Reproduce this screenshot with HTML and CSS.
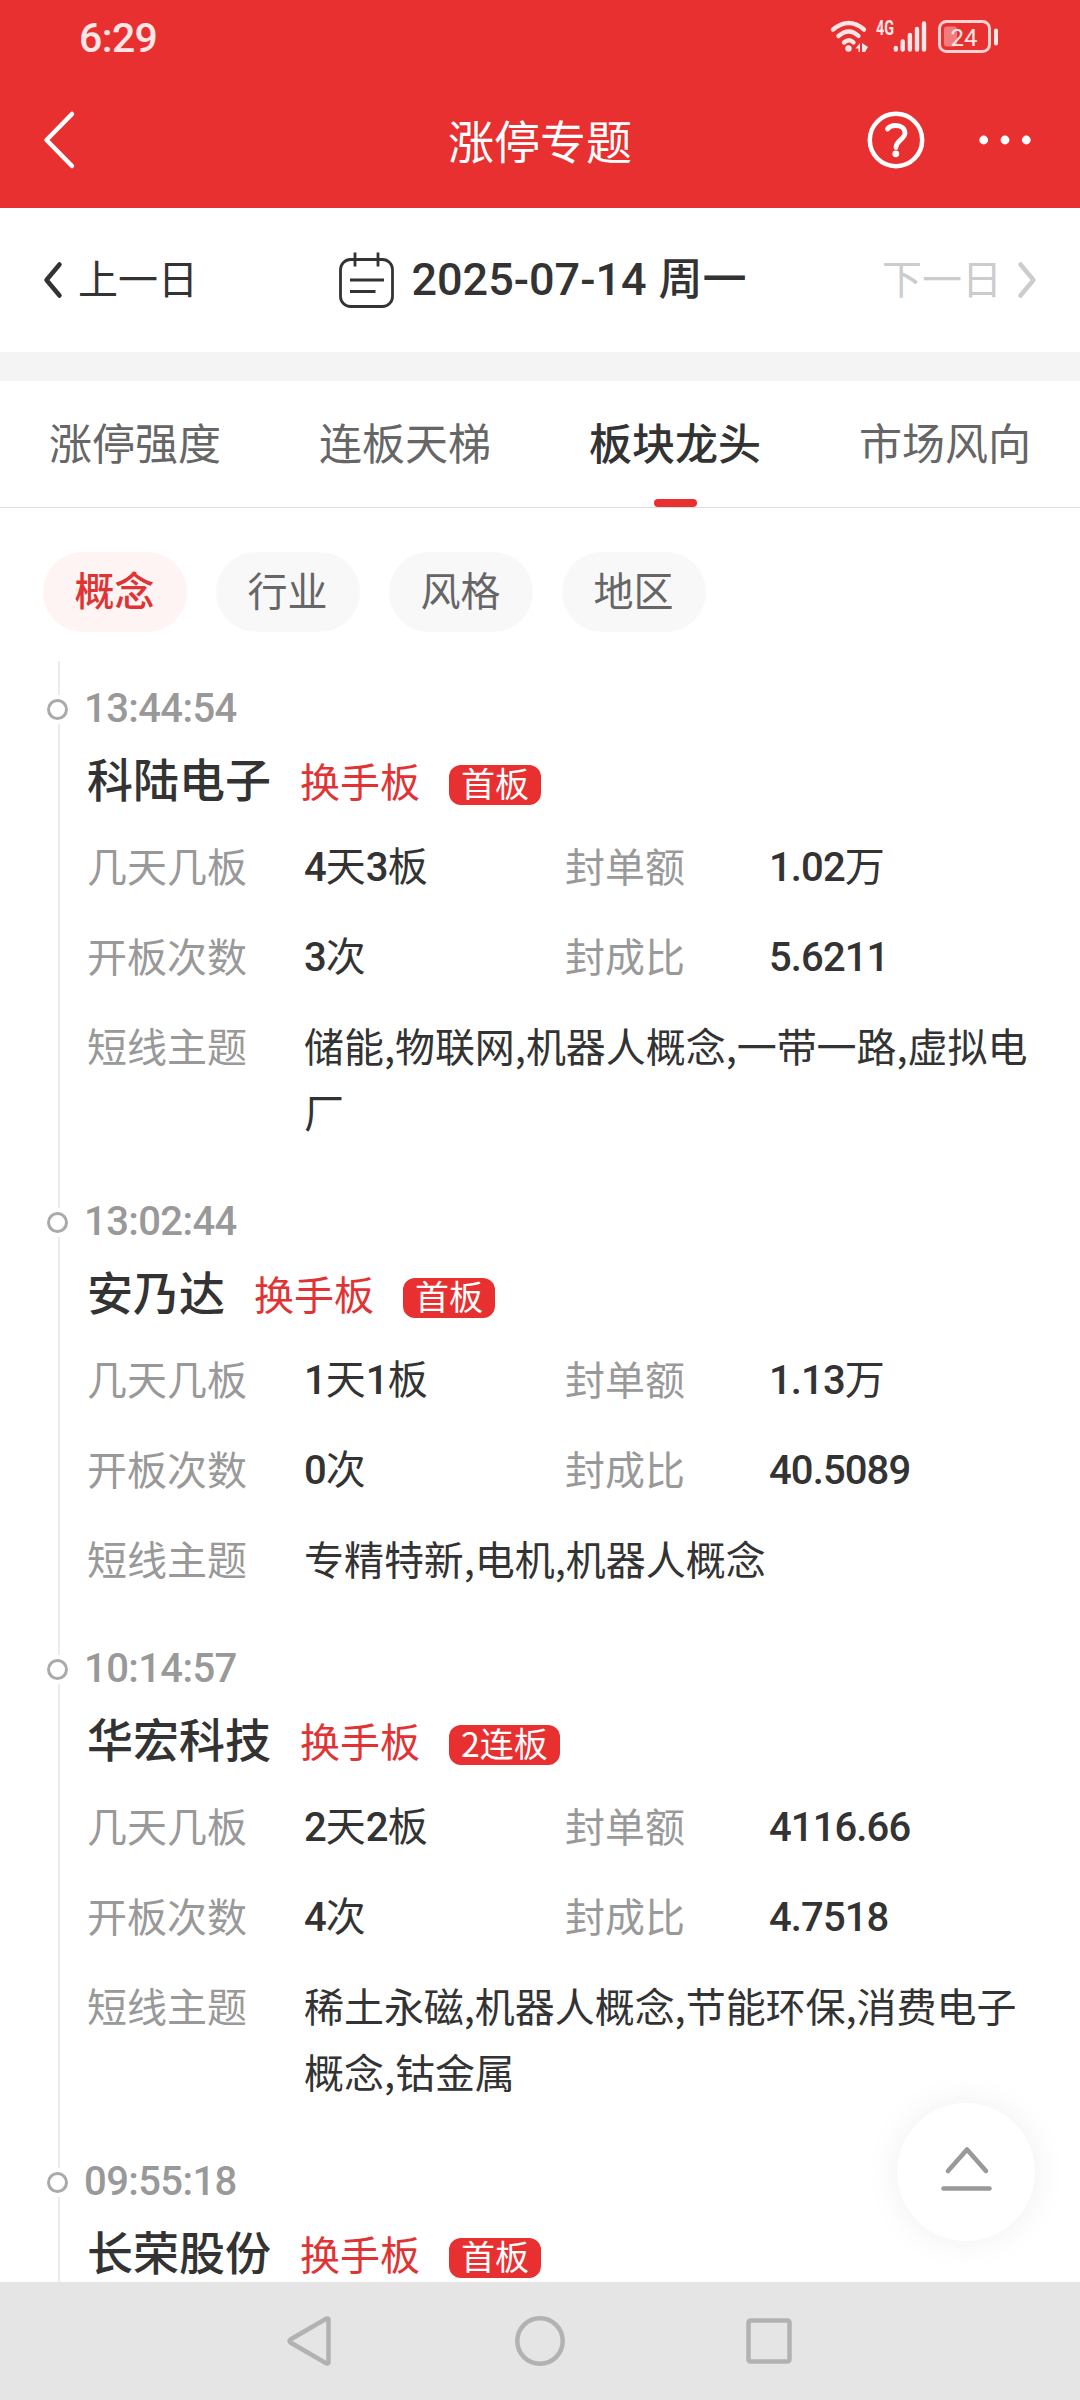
FILE: index.html
```html
<!DOCTYPE html>
<html lang="zh-CN">
<head>
  <meta charset="UTF-8" />
  <title>涨停专题</title>
  <link rel="stylesheet" href="styles.css">
</head>
<body>
  <div class="app">
    <header class="top">
      <div class="status">
        <span class="clock">6:29</span>
        <svg class="status-icons" width="168" height="34" viewBox="0 0 168 34">
          <g fill="none" stroke="#ffe6e6" stroke-width="4.4" stroke-linecap="round">
            <path d="M3 9.500Q19 -3.500 34 9.500M8.500 16Q19 7 28.500 16M14 22.500Q19 18 23.500 22.500"/>
            <path d="M65.800 28v1.500M72.700 21.500v8M79.900 15v14.500M87 9v20.500M94 3.500v26"/>
          </g>
          <g fill="#ffe6e6">
            <circle cx="18.500" cy="28.500" r="3.200"/>
            <path d="M25.500 28.500l4.500-5.500v9h-1.500v-3.500zM32 23l6 4-3 5h-3z"/>
            <rect x="164" y="8.500" width="4" height="17" rx="2"/>
            <rect x="114" y="6.500" width="13" height="20" rx="3" opacity=".42"/>
          </g>
          <rect x="109.500" y="1.500" width="50" height="30" rx="7" fill="none" stroke="#ffd2d2" stroke-width="3"/>
          <text class="net" x="46" y="15" textLength="18" lengthAdjust="spacingAndGlyphs">4G</text>
          <text class="level" x="120.500" y="26">24</text>
        </svg>
      </div>
      <div class="titlebar">
        <svg class="back" width="34" height="60" viewBox="0 0 34 60">
          <path d="M30 4L4.500 30L30 56" fill="none" stroke="#fff" stroke-width="4.500" stroke-linecap="round" stroke-linejoin="round"/>
        </svg>
        <h1>涨停专题</h1>
        <div class="actions">
          <svg width="58" height="58" viewBox="0 0 58 58">
            <circle cx="29" cy="29" r="26.200" fill="none" stroke="#fff" stroke-width="4.500"/>
            <path d="M20.500 18Q23 14.500 28.500 14.500C34.500 14.500 38 17.500 38 22C38 28 29 29.500 29 36.500" fill="none" stroke="#fff" stroke-width="4.800" stroke-linecap="round"/>
            <circle cx="28.800" cy="42.800" r="3.400" fill="#fff"/>
          </svg>
          <svg width="52" height="10" viewBox="0 0 52 10" fill="#fff">
            <circle cx="4.700" cy="5" r="4.400"/><circle cx="26" cy="5" r="4.400"/><circle cx="47.300" cy="5" r="4.400"/>
          </svg>
        </div>
      </div>
    </header>

    <div class="datebar">
      <a class="day">
        <svg width="20" height="38" viewBox="0 0 20 38"><path d="M16.500 3.500L3.500 19L16.500 34.500" fill="none" stroke="currentColor" stroke-width="4.500" stroke-linecap="round" stroke-linejoin="round"/></svg>
        <span>上一日</span>
      </a>
      <div class="date">
        <svg width="55" height="56" viewBox="0 0 55 56" fill="none" stroke="#333" stroke-width="2.800">
          <rect x="1.500" y="7.500" width="52" height="47" rx="10"/>
          <path d="M16 0.500v14M39 0.500v14M11 28h34M11 39.500h25.500"/>
        </svg>
        <span><span class="num">2025-07-14</span> 周一</span>
      </div>
      <a class="day disabled">
        <span>下一日</span>
        <svg width="20" height="38" viewBox="0 0 20 38"><path d="M3.500 3.500L16.500 19L3.500 34.500" fill="none" stroke="currentColor" stroke-width="4.500" stroke-linecap="round" stroke-linejoin="round"/></svg>
      </a>
    </div>

    <nav class="tabs">
      <a>涨停强度</a>
      <a>连板天梯</a>
      <a class="active">板块龙头</a>
      <a>市场风向</a>
    </nav>

    <div class="chips">
      <a class="active">概念</a>
      <a>行业</a>
      <a>风格</a>
      <a>地区</a>
    </div>

    <main class="timeline">
      <section class="item">
        <time>13:44:54</time>
        <div class="stock"><h2>科陆电子</h2><span class="kind">换手板</span><span class="badge">首板</span></div>
        <dl>
          <dt>几天几板</dt><dd><b>4</b>天<b>3</b>板</dd><dt>封单额</dt><dd><b>1.02</b>万</dd>
          <dt>开板次数</dt><dd><b>3</b>次</dd><dt>封成比</dt><dd><b>5.6211</b></dd>
          <dt>短线主题</dt><dd class="theme">储能,物联网,机器人概念,一带一路,虚拟电厂</dd>
        </dl>
      </section>

      <section class="item">
        <time>13:02:44</time>
        <div class="stock"><h2>安乃达</h2><span class="kind">换手板</span><span class="badge">首板</span></div>
        <dl>
          <dt>几天几板</dt><dd><b>1</b>天<b>1</b>板</dd><dt>封单额</dt><dd><b>1.13</b>万</dd>
          <dt>开板次数</dt><dd><b>0</b>次</dd><dt>封成比</dt><dd><b>40.5089</b></dd>
          <dt>短线主题</dt><dd class="theme">专精特新,电机,机器人概念</dd>
        </dl>
      </section>

      <section class="item">
        <time>10:14:57</time>
        <div class="stock"><h2>华宏科技</h2><span class="kind">换手板</span><span class="badge">2连板</span></div>
        <dl>
          <dt>几天几板</dt><dd><b>2</b>天<b>2</b>板</dd><dt>封单额</dt><dd><b>4116.66</b></dd>
          <dt>开板次数</dt><dd><b>4</b>次</dd><dt>封成比</dt><dd><b>4.7518</b></dd>
          <dt>短线主题</dt><dd class="theme">稀土永磁,机器人概念,节能环保,消费电子概念,钴金属</dd>
        </dl>
      </section>

      <section class="item">
        <time>09:55:18</time>
        <div class="stock"><h2>长荣股份</h2><span class="kind">换手板</span><span class="badge">首板</span></div>
      </section>
    </main>

    <a class="to-top">
      <svg width="54" height="46" viewBox="0 0 54 46" fill="none" stroke="#999" stroke-width="4.600" stroke-linecap="round" stroke-linejoin="round">
        <path d="M9 26L28 4.500L47 26M4.500 43.500h46"/>
      </svg>
    </a>

    <footer class="sysnav">
      <svg width="46" height="54" viewBox="0 0 46 54"><path d="M42.500 5.500v43a1.500 1.500 0 0 1-2 1L4.500 28.500q-2-1.500 0-3L40.500 4.500a1.500 1.500 0 0 1 2 1z"/></svg>
      <svg width="54" height="54" viewBox="0 0 54 54"><circle cx="28" cy="27" r="22.700"/></svg>
      <svg width="46" height="46" viewBox="0 0 46 46"><rect x="2.500" y="2.500" width="41" height="41" rx="2"/></svg>
    </footer>
  </div>
</body>
</html>
```
FILE: styles.css
```css
*, *::before, *::after { box-sizing: border-box; }
body {
  margin: 0;
  background: #fff;
  color: #333;
  font-family: "Noto Sans CJK SC", sans-serif;
}
h1, h2, dl, dd { margin: 0; font-weight: 400; }
svg { display: block; flex: none; overflow: visible; }
.num, .clock, .net, .level { font-family: Roboto, "Noto Sans CJK SC", sans-serif; }

.app {
  position: relative;
  width: 1080px;
  height: 2400px;
  display: flex;
  flex-direction: column;
  overflow: hidden;
}

/* red header */
.top {
  height: 208px;
  flex: none;
  background: #e83030;
  color: #fff;
}
.status {
  height: 72px;
  padding: 2px 82px 0 79px;
  display: flex;
  justify-content: space-between;
  align-items: center;
}
.clock {
  padding-top: 2px;
  font-size: 41px;
  font-weight: 500;
  line-height: 60px;
  letter-spacing: -.6px;
  color: #ffe6e6;
}
.net { font-size: 20px; font-weight: 700; fill: #ffe6e6; }
.level { font-size: 24px; fill: #ffe6e6; }
.titlebar {
  height: 136px;
  padding: 0 49px 0 42px;
  display: grid;
  grid-template-columns: 1fr auto 1fr;
  align-items: center;
}
.titlebar h1 { font-size: 46px; line-height: 66px; margin: -2px -7px 0 0; }
.actions {
  display: flex;
  align-items: center;
  justify-content: flex-end;
  gap: 54px;
}

/* date switcher */
.datebar {
  height: 173px;
  flex: none;
  padding: 0 43px;
  border-bottom: 29px solid #f4f4f4;
  display: flex;
  align-items: center;
  justify-content: space-between;
}
.day {
  display: flex;
  align-items: center;
  gap: 15px;
  font-size: 40px;
}
.day span { padding-bottom: 6px; }
.disabled { color: #ccc; }
.date {
  display: flex;
  align-items: center;
  gap: 17px;
  font-size: 44px;
  font-weight: 500;
}
.date > span { padding-bottom: 8px; margin-right: -6px; }
.date .num { font-size: 45px; margin-right: 2px; }

.tabs {
  height: 127px;
  flex: none;
  display: flex;
  border-bottom: 1px solid #ddd;
}
.tabs a {
  flex: 1;
  display: flex;
  flex-direction: column;
  align-items: center;
  justify-content: space-between;
  font-size: 43px;
  line-height: 62px;
  padding-top: 29px;
  color: #666;
}
.tabs .active { color: #333; font-weight: 500; }
.tabs .active::after {
  content: "";
  width: 43px;
  height: 8px;
  border-radius: 4px;
  background: #e83030;
}

.chips {
  flex: none;
  display: flex;
  gap: 29px;
  padding: 44px 43px 29px;
}
.chips a {
  width: 144px;
  height: 80px;
  padding-right: 1px;
  border-radius: 40px;
  background: #f8f8f8;
  color: #666;
  font-size: 40px;
  line-height: 75px;
  text-align: center;
}
.chips .active { background: #fff4f4; color: #e03434; font-weight: 500; }

/* timeline */
.timeline {
  flex: 1;
  min-height: 0;
  overflow: hidden;
}
.item {
  position: relative;
  padding: 16px 43px 16px 87px;
}
.item::before {
  content: "";
  position: absolute;
  left: 58px;
  top: 0;
  bottom: 0;
  width: 2px;
  background: #ececec;
}
.item::after {
  content: "";
  position: absolute;
  left: 47px;
  top: 38px;
  width: 21px;
  height: 21px;
  border: 3px solid #aaa;
  border-radius: 50%;
  background: #fff;
  box-shadow: 0 0 0 4px #fff;
}
.item time {
  display: block;
  height: 60px;
  margin-left: -3px;
  padding-top: 2px;
  font: 500 40px/60px Roboto, sans-serif;
  letter-spacing: -.6px;
  color: #999;
}
.stock {
  height: 85px;
  display: flex;
  align-items: center;
}
.stock h2 { font-size: 46px; font-weight: 500; line-height: 66px; padding-bottom: 5px; }
.kind { margin-left: 29px; font-size: 40px; color: #e03434; }
.badge {
  margin: 10px 0 0 29px;
  height: 40px;
  padding: 0 12px;
  border-radius: 12px;
  background: #e83030;
  color: #fff;
  font-size: 34px;
  line-height: 36px;
}
.item dl {
  display: grid;
  grid-template-columns: 217px 261px 204px 1fr;
  font-size: 40px;
  line-height: 66px;
}
.item dt, .item .theme { padding: 10px 0 14px; }
.item dt { color: #999; }
.item dd {
  padding: 13px 0 11px;
  font-family: Roboto, "Noto Sans CJK SC", sans-serif;
}
.item b { font-weight: 500; letter-spacing: -.9px; }
.item .theme {
  grid-column: 2 / -1;
  font-family: "Noto Sans CJK SC", sans-serif;
  letter-spacing: -.05px;
}

/* floating button over the list */
.to-top {
  position: absolute;
  right: 45px;
  bottom: 159px;
  width: 138px;
  height: 138px;
  border-radius: 50%;
  background: #fff;
  box-shadow: 0 0 32px 4px rgba(0,0,0,0.05);
  display: flex;
  align-items: center;
  justify-content: center;
  padding-bottom: 8px;
}

.sysnav {
  height: 118px;
  flex: none;
  padding-right: 2px;
  background: #e5e5e5;
  display: flex;
  align-items: center;
  justify-content: center;
  gap: 180px;
}
.sysnav svg { fill: none; stroke: #b2b2b2; stroke-width: 4.5px; }
```
